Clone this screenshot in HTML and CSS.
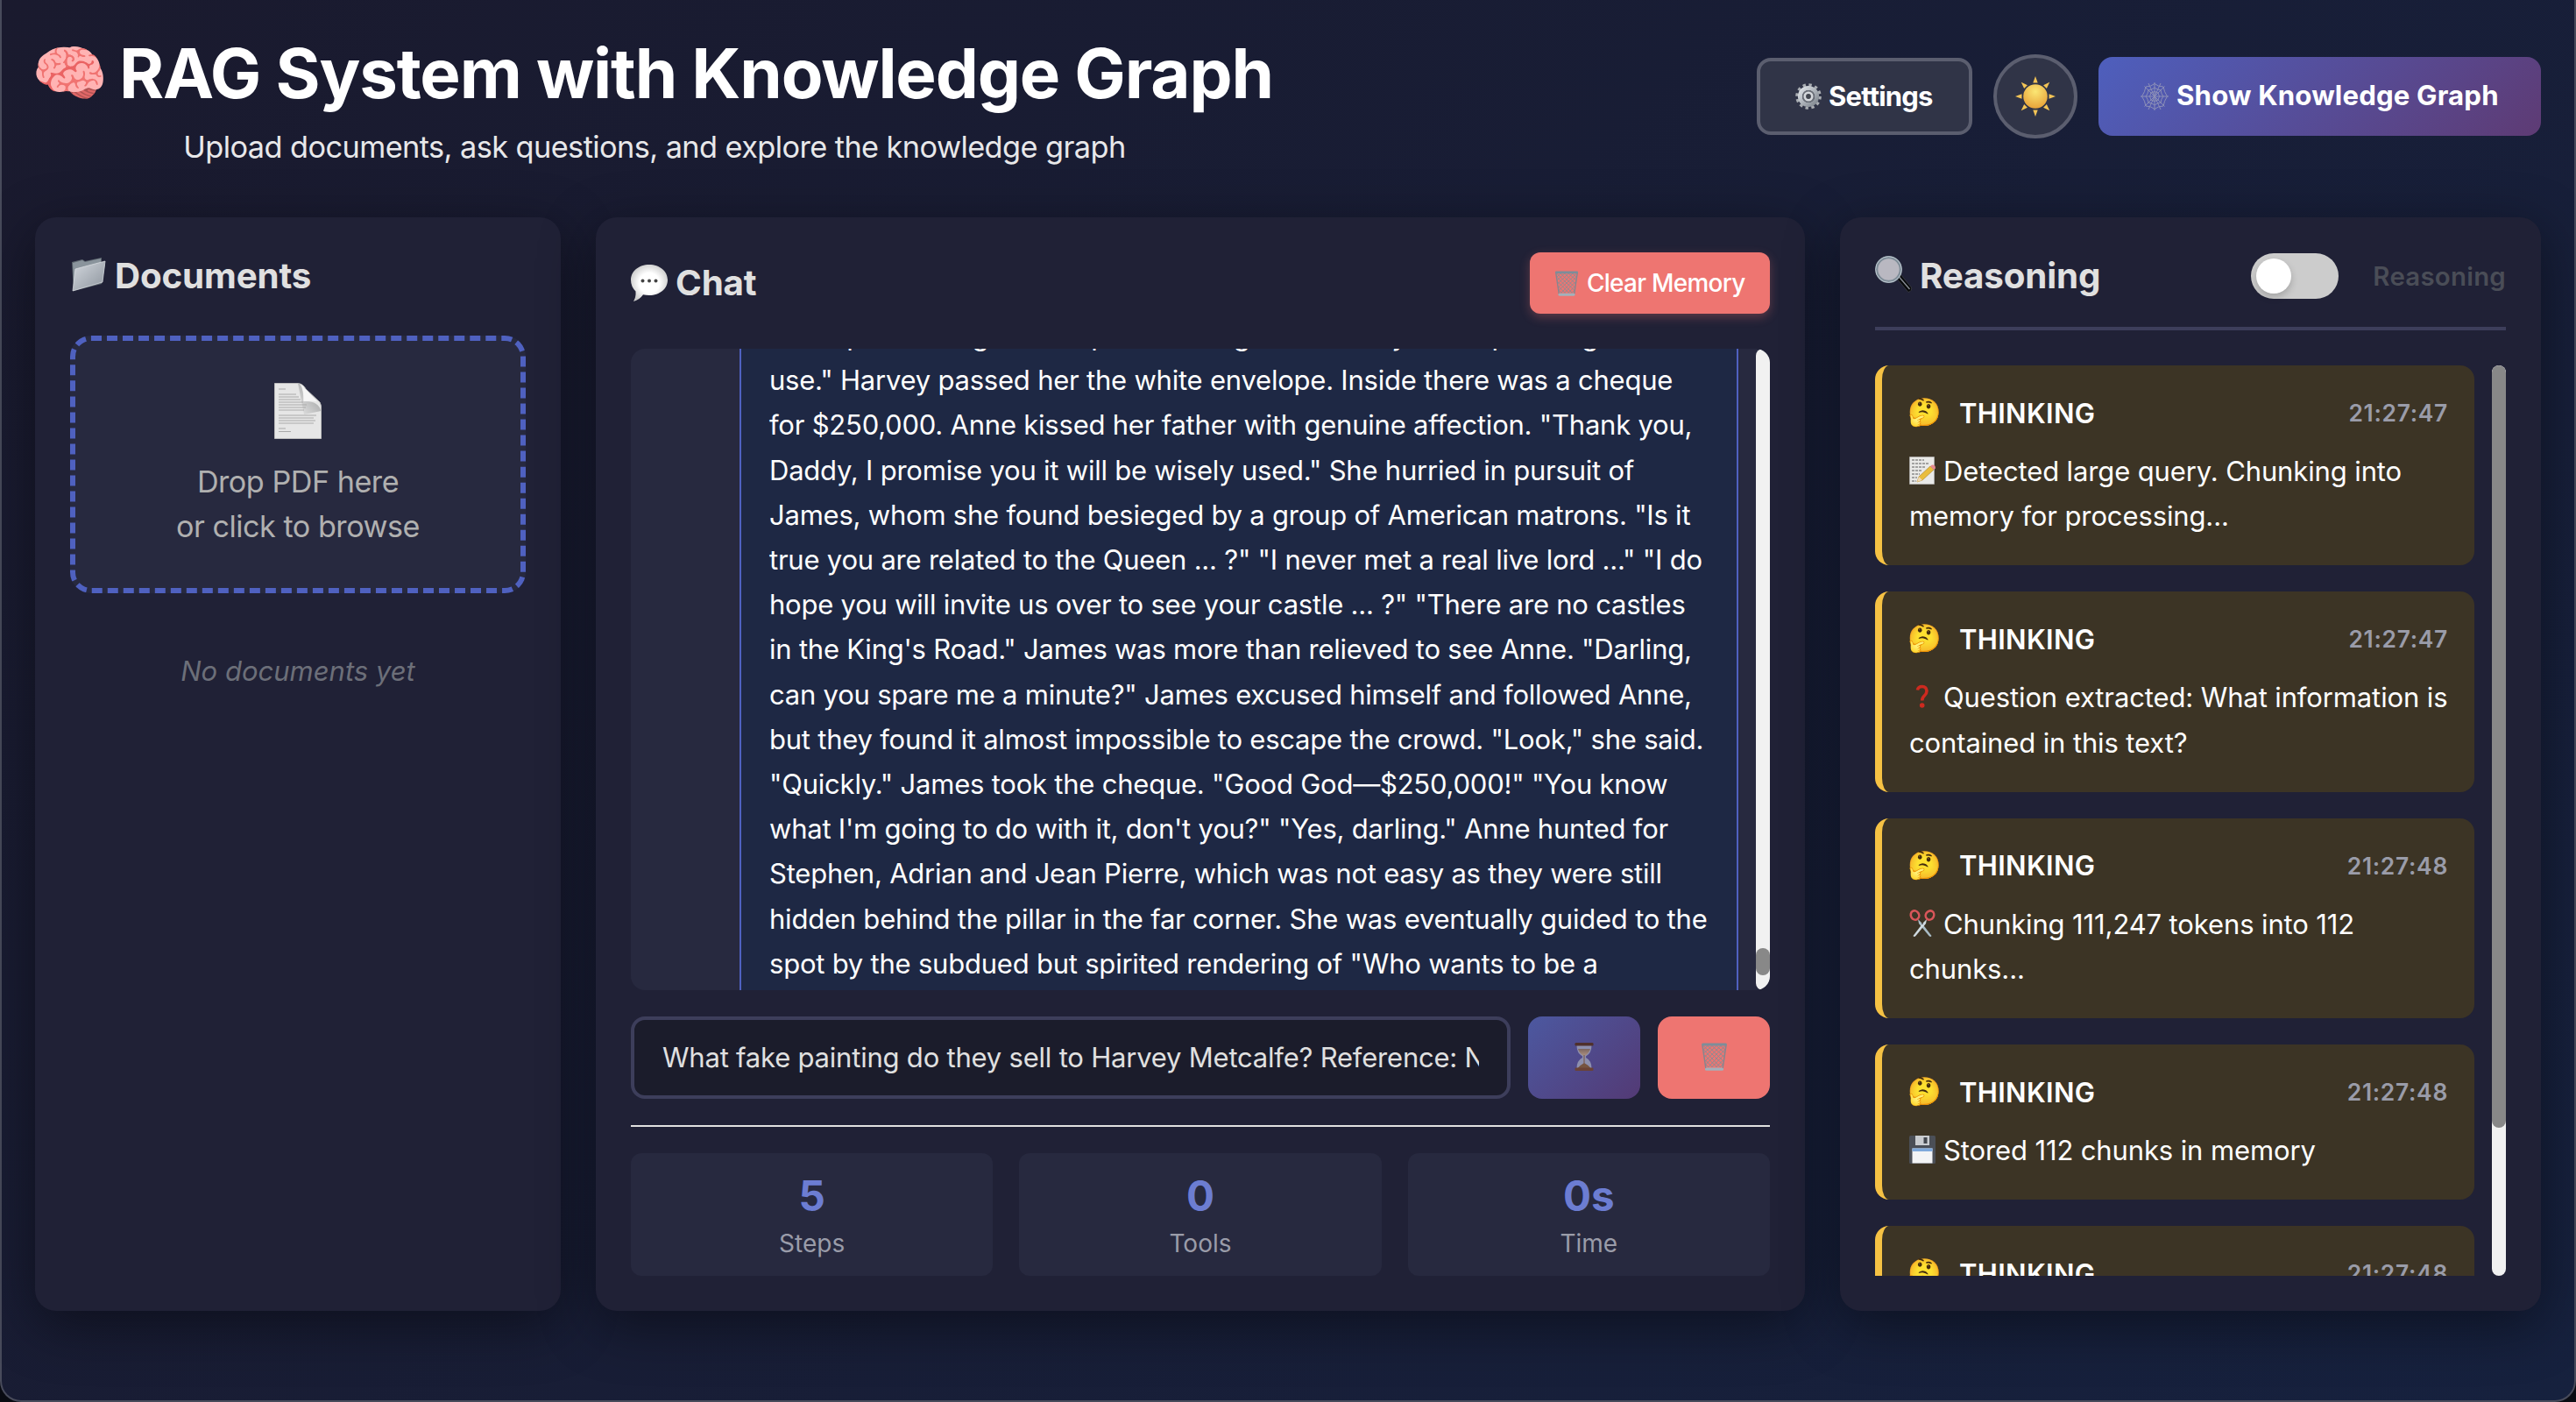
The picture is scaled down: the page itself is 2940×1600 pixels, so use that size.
FILE: index.html
```html
<!DOCTYPE html>
<html lang="en">
<head>
<meta charset="utf-8">
<title>RAG System with Knowledge Graph</title>
<link rel="stylesheet" href="styles.css">
</head>
<body>
<svg class="defs" width="0" height="0" aria-hidden="true">
  <defs>
    <linearGradient id="steel" x1="0" y1="0" x2="1" y2="1"><stop offset="0" stop-color="#dfe3e8"/><stop offset="1" stop-color="#7f868e"/></linearGradient>
    <linearGradient id="folder" x1="0" y1="0" x2="1" y2="1"><stop offset="0" stop-color="#d3d8de"/><stop offset="1" stop-color="#8d949d"/></linearGradient>
    <linearGradient id="sand" x1="0" y1="0" x2="0" y2="1"><stop offset="0" stop-color="#7c6560"/><stop offset="1" stop-color="#a98f7e"/></linearGradient>
    <radialGradient id="bubble" cx=".5" cy=".5" r=".55"><stop offset="0.5" stop-color="#ffffff"/><stop offset="1" stop-color="#c9c9c9"/></radialGradient>
    <linearGradient id="curl" x1="1" y1="0" x2="0" y2="1"><stop offset="0" stop-color="#77797a"/><stop offset="1" stop-color="#e4e4e4"/></linearGradient>
    <radialGradient id="sun" cx=".5" cy=".3" r=".75"><stop offset="0" stop-color="#fbe774"/><stop offset="1" stop-color="#e79e35"/></radialGradient>
    <symbol id="i-trash" viewBox="0 0 30 32">
      <path d="M2 3l23 22M7 3l18.500 18M12 3l14.500 13.500M17 3l10 9M22 3l5.500 5M3 8l19 20M4 14l14 14M5 20l8 8M5.500 25l3 3M28 3L5 25M23 3L4.500 21M18 3L3.500 16.500M13 3L3 12M8 3L2.500 8M27 8L8 28M26 14L12 28M25 20l-8 8M24.500 25l-3 3" stroke="#8b8c94" stroke-width="1" fill="none"/>
      <path d="M1.500 3l4 27M28.500 3l-4 27" stroke="#85868f" stroke-width="1.500" fill="none"/>
      <rect x=".5" y=".6" width="29" height="3" rx="1.500" fill="#7d8d99"/>
      <rect x="4.500" y="28.500" width="21" height="3.200" rx="1.500" fill="#a2b1bb"/>
    </symbol>
  </defs>
</svg>
<div class="window">
  <header class="header">
    <div class="titles">
      <h1 class="title"><span class="emoji brain">🧠</span>RAG System with Knowledge Graph</h1>
      <p class="subtitle">Upload documents, ask questions, and explore the knowledge graph</p>
    </div>
    <div class="actions">
      <button class="btn-settings">
        <svg class="ico-gear" viewBox="0 0 30 30"><circle cx="15" cy="15" r="13.200" fill="none" stroke="#a9adb2" stroke-width="3.200" stroke-dasharray="3.400 3.510"/><circle cx="15" cy="15" r="9.600" fill="none" stroke="url(#steel)" stroke-width="5"/><circle cx="15" cy="15" r="7" fill="#6b7078"/><circle cx="15" cy="15" r="4.200" fill="#42464f" stroke="#d5d8dc" stroke-width="2.600"/></svg>
        <span>Settings</span>
      </button>
      <button class="btn-theme">
        <svg class="ico-sun" viewBox="0 0 46 46"><g fill="#f3c456"><path id="ray" d="M20.300 7.500L23 0l2.700 7.500z"/><use href="#ray" transform="rotate(45 23 23)"/><use href="#ray" transform="rotate(90 23 23)"/><use href="#ray" transform="rotate(135 23 23)"/><use href="#ray" transform="rotate(180 23 23)"/><use href="#ray" transform="rotate(225 23 23)"/><use href="#ray" transform="rotate(270 23 23)"/><use href="#ray" transform="rotate(315 23 23)"/></g><circle cx="23" cy="23" r="13.800" fill="url(#sun)"/></svg>
      </button>
      <button class="btn-graph">
        <svg class="ico-web" viewBox="0 0 32 32" fill="none" stroke="#8d90b8" stroke-width="1"><path d="M16 0v32M0 16h32M4.500 4.500l23 23M27.500 4.500l-23 23M9 1l14 30M23 1L9 31"/><path d="M16 1.500Q20 5 26 5Q27 11 30.500 16Q27 21 26 27Q20 27 16 30.500Q12 27 6 27Q5 21 1.500 16Q5 11 6 5Q12 5 16 1.500z"/><path d="M16 6Q19 8.500 23 9Q23.500 13 26 16Q23.500 19 23 23Q19 23.500 16 26Q13 23.500 9 23Q8.500 19 6 16Q8.500 13 9 9Q13 8.500 16 6z"/><path d="M16 10.500l4 1.500 1.500 4-1.500 4-4 1.500-4-1.500-1.500-4 1.500-4z"/></svg>
        <span>Show Knowledge Graph</span>
      </button>
    </div>
  </header>

  <main class="columns">
    <section class="panel">
      <h2 class="panel-title">
        <svg class="ico-folder" viewBox="0 0 40 38"><path d="M1 5L13 2l3 2 19-4v6l4 2-4 22L3 38z" fill="#5d666f"/><path d="M2 6l11-3 3 2 18-4v10L3 30z" fill="#8a949c"/><path d="M5 13L39 4l-3 24L2 38z" fill="url(#folder)" stroke="#e0e3e6" stroke-width=".7"/></svg>
        <span>Documents</span>
      </h2>
      <div class="dropzone">
        <svg class="ico-page" viewBox="0 0 54 64"><path d="M.5.5H27Q33 1 36 7L52 22q2 3 1.500 9v32.500H.5z" fill="#e6e6e6" stroke="#bcbcbc"/><path d="M27 .5q6 1 6.500 20.500Q50 20 53.500 32L34 36z" fill="url(#curl)" opacity=".75"/><path d="M30 1q4 7 3.500 20Q43 20 49 21z" fill="#f6f6f6"/><path d="M5 7h8M5 13h20M5 16h23M5 19h25M5 22h28M5 25h32M5 28h31M5 31h29M5 37h43M5 40h40M5 43h42M5 46h40M5 52h8M5 55.500h14" stroke="#a9a9a9" stroke-width="1.200"/></svg>
        <p class="drop-text">Drop PDF here<br>or click to browse</p>
      </div>
      <p class="empty">No documents yet</p>
    </section>

    <section class="panel">
      <div class="chat-head">
        <h2 class="panel-title">
          <svg class="ico-bubble" viewBox="0 0 42 42"><path d="M21 0C33 0 42 7.500 42 17.500S33 35 21 35q-4 0-7-.8Q10 40 3 42q3-5 2.500-11.500Q0 25 0 17.500C0 7.500 9 0 21 0z" fill="url(#bubble)"/><circle cx="13.500" cy="18.500" r="2" fill="#444"/><circle cx="21" cy="18.500" r="2" fill="#444"/><circle cx="28.500" cy="18.500" r="2" fill="#444"/></svg>
          <span>Chat</span>
        </h2>
        <button class="btn-clear"><svg class="ico-trash-s"><use href="#i-trash"/></svg><span>Clear Memory</span></button>
      </div>
      <div class="chat-log">
        <div class="log-view">
          <div class="message">and a prize and good old place asking to me today to keep asking<br>use." Harvey passed her the white envelope. Inside there was a cheque<br>for $250,000. Anne kissed her father with genuine affection. "Thank you,<br>Daddy, I promise you it will be wisely used." She hurried in pursuit of<br>James, whom she found besieged by a group of American matrons. "Is it<br>true you are related to the Queen ... ?" "I never met a real live lord ..." "I do<br>hope you will invite us over to see your castle ... ?" "There are no castles<br>in the King's Road." James was more than relieved to see Anne. "Darling,<br>can you spare me a minute?" James excused himself and followed Anne,<br>but they found it almost impossible to escape the crowd. "Look," she said.<br>"Quickly." James took the cheque. "Good God—$250,000!" "You know<br>what I'm going to do with it, don't you?" "Yes, darling." Anne hunted for<br>Stephen, Adrian and Jean Pierre, which was not easy as they were still<br>hidden behind the pillar in the far corner. She was eventually guided to the<br>spot by the subdued but spirited rendering of "Who wants to be a</div>
        </div>
        <div class="scroll"><div class="thumb thumb-chat"></div></div>
      </div>
      <div class="composer">
        <input class="query" type="text" value="What fake painting do they sell to Harvey Metcalfe? Reference: Not a Penny More">
        <button class="btn-send"><svg class="ico-glass" viewBox="0 0 22 32"><path d="M2.500 3h17q0 9-6.500 12.500v1.500q6.500 3.500 6.500 12h-17q0-8.500 6.500-12v-1.500Q2.500 12 2.500 3z" fill="#8d8fae"/><path d="M4 7h14q-1.500 5-5.500 7.500h-3Q5.500 12 4 7z" fill="url(#sand)"/><path d="M3.500 29q4-4 7.500-6 4 2 7.500 6zM10.500 14h1v10h-1z" fill="#765440"/><rect x=".5" width="21" height="3.500" rx="1.200" fill="#4f302c"/><rect x=".5" y="28.500" width="21" height="3.500" rx="1.200" fill="#6a4236"/></svg></button>
        <button class="btn-trash"><svg class="ico-trash"><use href="#i-trash"/></svg></button>
      </div>
      <div class="stats">
        <div class="stat"><div class="stat-num">5</div><div class="stat-label">Steps</div></div>
        <div class="stat"><div class="stat-num">0</div><div class="stat-label">Tools</div></div>
        <div class="stat"><div class="stat-num">0s</div><div class="stat-label">Time</div></div>
      </div>
    </section>

    <section class="panel">
      <div class="reason-head">
        <h2 class="panel-title">
          <svg class="ico-lens" viewBox="0 0 42 42"><path d="M24 25l5-4 12.500 15q1 4-3.500 5.500z" fill="#08090b" stroke="#3c3f45" stroke-width=".8"/><path d="M27 23.500L39.500 38" stroke="#8b9097" stroke-width="1.300"/><circle cx="15.500" cy="15.500" r="13.800" fill="#b9b8c1" stroke="#7f8d98" stroke-width="3.200"/><circle cx="15.500" cy="15.500" r="14.800" fill="none" stroke="#c6d0d8" stroke-width=".9"/></svg>
          <span>Reasoning</span>
        </h2>
        <div class="switch"><span class="toggle"><span class="knob"></span></span><span class="switch-label">Reasoning</span></div>
      </div>
      <div class="reason-body">
        <div class="steps">
          <article class="step">
            <div class="step-head"><span class="emoji face">🤔</span><span class="step-kind">THINKING</span><time class="step-time">21:27:47</time></div>
            <p class="step-text"><svg class="ico-step" viewBox="0 0 30 32"><path d="M.5.500h28v31H.5z" fill="#e9e9e7" stroke="#bbb" stroke-width=".6"/><path d="M3 4h14M3 8h20M3 12h16M3 16h12M3 20h9M3 24h6M3 28h5" stroke="#8a8a8a" stroke-width="1.300" stroke-dasharray="3 1"/><path d="M9 29l2-6L24 11l4 4-13 12z" fill="#e9bd3c" stroke="#a97f22" stroke-width=".6"/><path d="M9 29l2-6 4 4z" fill="#efd9b4"/><path d="M24 11l2-1.500q4-.5 4 4L28 15z" fill="#e48a92"/></svg>Detected large query. Chunking into<br>memory for processing...</p>
          </article>
          <article class="step">
            <div class="step-head"><span class="emoji face">🤔</span><span class="step-kind">THINKING</span><time class="step-time">21:27:47</time></div>
            <p class="step-text"><svg class="ico-step" viewBox="0 0 30 32"><path d="M9.500 8.500Q10 4.500 14.800 4.500T20 9.500Q20 12.500 17.300 15T14.700 20.500" fill="none" stroke="#cd2a1f" stroke-width="3.600"/><circle cx="14.700" cy="26" r="2.800" fill="#cd2a1f"/></svg>Question extracted: What information is<br>contained in this text?</p>
          </article>
          <article class="step">
            <div class="step-head"><span class="emoji face">🤔</span><span class="step-kind">THINKING</span><time class="step-time">21:27:48</time></div>
            <p class="step-text"><svg class="ico-step" viewBox="0 0 30 32"><path d="M10 11l4 4L25.500 30q-1 2-3 0L11 16z" fill="#a9bcc6"/><path d="M20 11l-4 4L4.500 30q1 2 3 0L19 16z" fill="#cfdae0"/><g fill="none" stroke="#d9565a" stroke-width="2.600"><ellipse cx="6.500" cy="6.500" rx="4.600" ry="5.200" transform="rotate(-30 6.500 6.500)"/><ellipse cx="23.500" cy="6.500" rx="4.600" ry="5.200" transform="rotate(30 23.500 6.500)"/></g><circle cx="15" cy="16" r="1" fill="#555"/></svg>Chunking 111,247 tokens into 112<br>chunks...</p>
          </article>
          <article class="step">
            <div class="step-head"><span class="emoji face">🤔</span><span class="step-kind">THINKING</span><time class="step-time">21:27:48</time></div>
            <p class="step-text"><svg class="ico-step" viewBox="0 0 30 32"><rect width="30" height="32" rx="1.500" fill="#4b4f57"/><rect x="7" width="16" height="11" fill="#c9ccd0"/><rect x="16.500" y="2" width="4" height="7" fill="#43474e"/><rect x="3.500" y="14.500" width="23" height="17" fill="#f3f4f6"/><rect x="3.500" y="14.500" width="23" height="3.500" fill="#7fa9dc"/></svg>Stored 112 chunks in memory</p>
          </article>
          <article class="step">
            <div class="step-head"><span class="emoji face">🤔</span><span class="step-kind">THINKING</span><time class="step-time">21:27:48</time></div>
            <p class="step-text">Processing...</p>
          </article>
        </div>
        <div class="scroll"><div class="thumb thumb-steps"></div></div>
      </div>
    </section>
  </main>
</div>
</body>
</html>
```
FILE: styles.css
```css
* { box-sizing: border-box; margin: 0; padding: 0; }

html, body { height: 100%; background: #090b12; overflow: hidden; }

body {
  font-family: "Inter", "Liberation Sans", sans-serif;
  color: #fff;
}

button { border: 0; font: inherit; color: inherit; }
svg { display: block; flex: none; overflow: visible; }
.defs { position: absolute; }
.emoji { flex: none; font-family: "Noto Color Emoji", sans-serif; letter-spacing: 0; }

.window {
  width: 2940px;
  height: 1600px;
  padding: 40px 38px 0;
  border: 2px solid #484b5b;
  border-top: 0;
  border-radius: 0 0 24px 24px;
  background: linear-gradient(135deg, #1a1a2e 0%, #16213e 100%);
}

/* Header */
.header {
  display: flex;
  justify-content: space-between;
  align-items: flex-start;
  height: 149px;
  margin-bottom: 59px;
}
.titles { width: 1410px; }
.title {
  display: flex;
  font-size: 78px;
  font-weight: 700;
  line-height: 88px;
  letter-spacing: -1.17px;
  white-space: nowrap;
}
.brain { width: 97px; font-size: 70px; margin-left: -4px; margin-right: 3px; }
.subtitle {
  margin-top: 19px;
  padding-left: 4px;
  text-align: center;
  font-size: 34.3px;
  line-height: 42px;
  letter-spacing: -0.57px;
  color: #e8e8ea;
}
.actions { display: flex; align-items: center; gap: 24px; height: 96px; margin-top: 22px; }
.actions button { display: flex; align-items: center; white-space: nowrap; }
.actions span { margin-top: -2px; }
.btn-settings {
  width: 246px;
  height: 88px;
  padding-left: 40px;
  gap: 8px;
  border: 4px solid #5b5e6f;
  border-radius: 16px;
  background: #303447;
  font-size: 31px;
  font-weight: 700;
  letter-spacing: -0.8px;
}
.ico-gear { width: 30px; height: 30px; }
.btn-theme {
  width: 96px;
  height: 96px;
  justify-content: center;
  border: 4px solid #5b5e6f;
  border-radius: 50%;
  background: #303447;
}
.ico-sun { width: 46px; height: 46px; }
.btn-graph {
  width: 505px;
  height: 90px;
  padding-left: 48px;
  gap: 9px;
  border-radius: 16px;
  background: linear-gradient(135deg, #4e5fbd 0%, #5e3b74 100%);
  font-size: 31.2px;
  font-weight: 700;
  letter-spacing: 0.15px;
}
.ico-web { width: 32px; height: 32px; }

/* Panels */
.columns { display: grid; grid-template-columns: 600px 1380px 800px; gap: 40px; height: 1248px; }
.panel {
  display: flex;
  flex-direction: column;
  min-height: 0;
  padding: 40px;
  border-radius: 24px;
  background: #202136;
  box-shadow: 0 16px 64px rgba(0, 0, 0, 0.45);
}
.panel-title {
  display: flex;
  align-items: center;
  font-size: 40.3px;
  font-weight: 700;
  line-height: 54px;
  letter-spacing: -0.15px;
  color: #e0e0e0;
}

/* Documents */
.ico-folder { width: 40px; height: 38px; margin: -4px 10px 0 1px; }
.dropzone {
  height: 294px;
  margin-top: 41px;
  padding-top: 48px;
  border: 6px dashed #4f61c0;
  border-radius: 24px;
  background: #27293f;
  text-align: center;
}
.ico-page { width: 54px; height: 64px; margin: 0 auto 23px; }
.drop-text { font-size: 34.2px; line-height: 51.2px; letter-spacing: -0.5px; color: #b0b0b0; }
.empty {
  margin-top: 64px;
  text-align: center;
  font-size: 31px;
  font-style: italic;
  line-height: 50px;
  color: #6c6f79;
}

/* Chat */
.chat-head { display: flex; justify-content: space-between; align-items: center; height: 70px; }
.ico-bubble { width: 42px; height: 42px; margin: 0 9px 0 0; }
.btn-clear {
  display: flex;
  align-items: center;
  width: 274px;
  height: 70px;
  padding-left: 28px;
  gap: 9px;
  border-radius: 12px;
  background: #ee7571;
  box-shadow: 0 4px 12px rgba(238, 117, 113, 0.3);
  font-size: 27.9px;
  font-weight: 500;
  letter-spacing: -0.7px;
  white-space: nowrap;
}
.ico-trash-s { width: 28px; height: 29px; }
.chat-log {
  display: flex;
  justify-content: space-between;
  height: 732px;
  margin-top: 40px;
  border-radius: 16px;
  background: #27293f;
  overflow: hidden;
}
.log-view { width: 1284px; overflow: hidden; padding-left: 124px; }
.message {
  width: 1140px;
  margin-top: -63px;
  padding: 20px 0 60px 32px;
  border: 2px solid #4f61c0;
  border-radius: 24px;
  background: #1e2844;
  font-size: 31px;
  line-height: 51.2px;
  letter-spacing: -0.22px;
  white-space: nowrap;
}
.scroll { flex: none; width: 16px; border-radius: 8px; background: #f1f1f1; overflow: hidden; }
.thumb { border-radius: 8px; background: #888; }
.thumb-chat { height: 31px; margin-top: 684px; }
.composer { display: flex; gap: 20px; height: 94px; margin-top: 30px; }
.query {
  flex: 1;
  min-width: 0;
  padding: 0 32px 1px;
  border: 4px solid #3d3e5b;
  border-radius: 16px;
  background: #1b1c2b;
  font: 400 31px "Inter", sans-serif;
  letter-spacing: -0.21px;
  color: #e0e0e0;
}
.btn-send, .btn-trash {
  display: flex;
  align-items: center;
  justify-content: center;
  width: 128px;
  padding-bottom: 2px;
  border-radius: 16px;
}
.btn-send { background: linear-gradient(135deg, #4c58a0 0%, #533a75 100%); }
.btn-trash { background: #ee7571; }
.ico-glass { width: 22px; height: 32px; }
.ico-trash { width: 31px; height: 32px; }
.stats {
  display: grid;
  grid-template-columns: repeat(3, 1fr);
  gap: 30px;
  margin-top: 30px;
  padding-top: 30px;
  border-top: 2px solid #e0e0e0;
}
.stat { height: 140px; padding-top: 19px; border-radius: 12px; background: #27293f; text-align: center; }
.stat-num { font-size: 47.5px; font-weight: 700; line-height: 60px; color: #6c7dd2; }
.stat-label { margin-top: 1px; font-size: 28px; line-height: 46px; color: #9a9ca9; }

/* Reasoning */
.reason-head {
  display: flex;
  justify-content: space-between;
  height: 89px;
  padding-bottom: 31px;
  border-bottom: 4px solid #3d3e5b;
}
.ico-lens { width: 42px; height: 42px; margin: -4px 9px 0 0; }
.switch { display: flex; align-items: center; gap: 39px; }
.toggle { width: 100px; height: 52px; padding: 6px; border-radius: 26px; background: #ccc; }
.knob { display: block; width: 40px; height: 40px; border-radius: 50%; background: #fff; box-shadow: 0 4px 8px rgba(0, 0, 0, 0.2); }
.switch-label { font-size: 29.4px; font-weight: 600; letter-spacing: 0.25px; color: #4a4d57; }
.reason-body { display: flex; justify-content: space-between; flex: 1; min-height: 0; margin-top: 40px; }
.steps { width: 684px; overflow: hidden; }
.step {
  margin-bottom: 30px;
  padding: 27px 30px 31px 31px;
  border-left: 8px solid #f6c244;
  border-radius: 16px;
  background: #3c3425;
}
.step-head { display: flex; align-items: center; height: 54px; margin-bottom: 14px; }
.face { width: 59px; margin-left: -2px; font-size: 31px; line-height: 54px; }
.step-kind { flex: 1; font-size: 31px; font-weight: 600; letter-spacing: 0.3px; }
.step-time { font-size: 26.4px; font-weight: 600; letter-spacing: 0.7px; color: #9a9ca9; }
.step-text { font-size: 31px; line-height: 51.2px; letter-spacing: -0.12px; white-space: nowrap; }
.ico-step { display: inline-block; width: 30px; height: 32px; margin-right: 9px; vertical-align: -4px; }
.thumb-steps { height: 870px; }
```
